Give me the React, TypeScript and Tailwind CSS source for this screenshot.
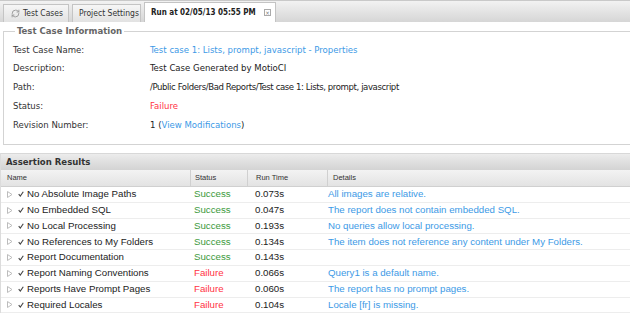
import { RefreshCw } from "lucide-react";

const tahoma = { fontFamily: '"DejaVu Sans Condensed", "DejaVu Sans", sans-serif' };
const arial = { fontFamily: '"Liberation Sans", Arial, sans-serif' };

type Row = { name: string; ok: boolean; time: string; details: string };

const rows: Row[] = [
  { name: "No Absolute Image Paths", ok: true, time: "0.073s", details: "All images are relative." },
  { name: "No Embedded SQL", ok: true, time: "0.047s", details: "The report does not contain embedded SQL." },
  { name: "No Local Processing", ok: true, time: "0.193s", details: "No queries allow local processing." },
  { name: "No References to My Folders", ok: true, time: "0.134s", details: "The item does not reference any content under My Folders." },
  { name: "Report Documentation", ok: true, time: "0.143s", details: "" },
  { name: "Report Naming Conventions", ok: false, time: "0.066s", details: "Query1 is a default name." },
  { name: "Reports Have Prompt Pages", ok: false, time: "0.060s", details: "The report has no prompt pages." },
  { name: "Required Locales", ok: false, time: "0.104s", details: "Locale [fr] is missing." },
];

function Tabs() {
  return (
    <div className="flex h-[22px] items-end gap-[3px] border-t border-[#c9c9c9] bg-gradient-to-b from-[#f2f2f2] to-[#d6d6d6] pl-[3px] text-[8.5px] whitespace-nowrap text-[#333]" style={tahoma}>
      <div className="flex h-[18px] w-[66px] items-center gap-[3px] border border-b-0 border-[#c4c4c4] bg-gradient-to-b from-[#f6f6f6] to-[#e2e2e2] pl-[7px]">
        <RefreshCw className="h-[9px] w-[9px] text-[#9a9a9a]" strokeWidth={2.5} />
        <span>Test Cases</span>
      </div>
      <div className="flex h-[18px] w-[69px] items-center border border-b-0 border-[#c4c4c4] bg-gradient-to-b from-[#f6f6f6] to-[#e2e2e2] pl-[6px]">
        Project Settings
      </div>
      <div className="flex h-[20px] w-[132px] items-center border border-b-0 border-[#c4c4c4] bg-white pl-[6px] text-[8px] font-bold text-[#222]">
        <span>Run at 02/05/13 05:55 PM</span>
        <span className="ml-auto mr-[4px] flex h-[7px] w-[7px] items-center justify-center border border-[#aaa] text-[6px] font-normal leading-none text-[#777]">×</span>
      </div>
    </div>
  );
}

function InfoRow({ label, children }: { label: string; children: React.ReactNode }) {
  return (
    <div className="flex h-[18.8px] items-center">
      <div className="w-[137px] text-[#333]">{label}</div>
      <div className="text-[#222]">{children}</div>
    </div>
  );
}

function Expander() {
  return (
    <svg width="6" height="7" viewBox="0 0 6 7" className="shrink-0">
      <path d="M0.5 0.5 L5 3.5 L0.5 6.5 Z" fill="none" stroke="#bcbcbc" strokeWidth="1" />
    </svg>
  );
}

function Check() {
  return (
    <svg width="6" height="6" viewBox="0 0 6 6" className="shrink-0">
      <path d="M0.7 3.2 L2.3 5 L5.3 0.8" fill="none" stroke="#444" strokeWidth="1.1" />
    </svg>
  );
}

export default function App() {
  return (
    <div className="h-[331px] w-[630px] overflow-hidden bg-white">
      <Tabs />
      <div className="pt-[2px]">
        <fieldset className="ml-[3px] h-[121px] border border-r-0 border-[#d3d3d3] pl-[9px] text-[9.5px] whitespace-nowrap" style={tahoma}>
          <legend className="ml-[2px] px-[2px] text-[9.5px] font-bold text-[#666]">Test Case Information</legend>
          <div className="pt-[2px]">
            <InfoRow label="Test Case Name:">
              <span className="text-[#3d9ae6]">Test case 1: Lists, prompt, javascript - Properties</span>
            </InfoRow>
            <InfoRow label="Description:">Test Case Generated by MotioCI</InfoRow>
            <InfoRow label="Path:">
              <span className="tracking-[-0.4px]">/Public Folders/Bad Reports/Test case 1: Lists, prompt, javascript</span>
            </InfoRow>
            <InfoRow label="Status:">
              <span className="text-[#ff3344]">Failure</span>
            </InfoRow>
            <InfoRow label="Revision Number:">
              1 (<span className="text-[#3d9ae6]">View Modifications</span>)
            </InfoRow>
          </div>
        </fieldset>
      </div>

      <div className="mt-[8px] border-l border-[#dcdcdc]">
        <div className="flex h-[17px] items-center border-t border-[#d8d8d8] bg-gradient-to-b from-[#ececec] to-[#d3d3d3] pl-[5px] text-[9.5px] font-bold text-[#333]" style={tahoma}>
          Assertion Results
        </div>
        <div
          className="grid h-[17px] grid-cols-[190px_57px_80px_1fr] items-center border-b border-[#d0d0d0] bg-gradient-to-b from-[#f3f3f3] to-[#e3e3e3] text-[7.5px] text-[#333]"
          style={arial}
        >
          <div className="flex h-full items-center border-r border-[#d0d0d0] pl-[6px]">Name</div>
          <div className="flex h-full items-center border-r border-[#d0d0d0] pl-[4px]">Status</div>
          <div className="flex h-full items-center border-r border-[#d0d0d0] pl-[8px]">Run Time</div>
          <div className="flex h-full items-center pl-[5px]">Details</div>
        </div>
        <div className="text-[9.7px]" style={arial}>
          {rows.map((r) => (
            <div key={r.name} className="grid h-[15.8px] grid-cols-[190px_57px_80px_1fr] items-center border-b border-[#ededed]">
              <div className="flex items-center gap-[5px] pl-[6px] text-[#222]">
                <Expander />
                <Check />
                <span className="-ml-[2px]">{r.name}</span>
              </div>
              <div className={`pl-[3px] ${r.ok ? "text-[#3c9a3c]" : "text-[#ff3344]"}`}>{r.ok ? "Success" : "Failure"}</div>
              <div className="pl-[7px] text-[#222]">{r.time}</div>
              <div className="text-[#3d9ae6]">{r.details}</div>
            </div>
          ))}
        </div>
      </div>
    </div>
  );
}
